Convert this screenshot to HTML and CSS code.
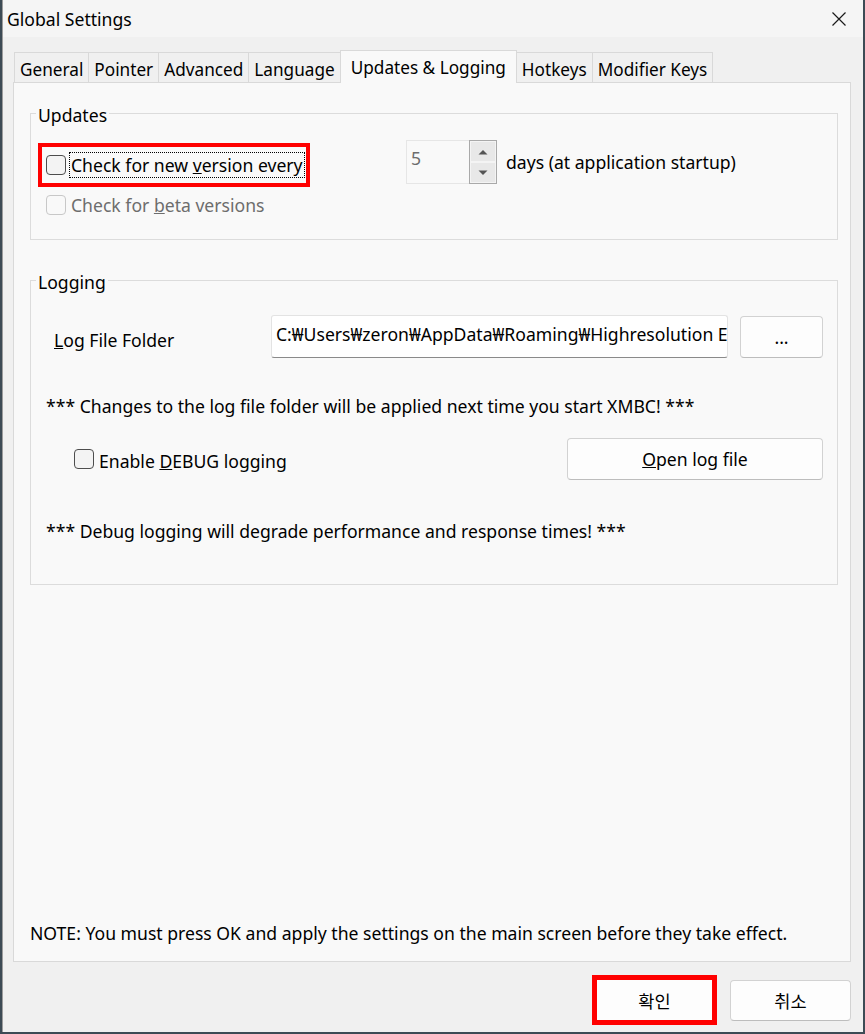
FILE: index.html
```html
<!DOCTYPE html>
<html lang="en">
<head>
    <meta charset="UTF-8">
    <meta name="viewport" content="width=device-width, initial-scale=1">
    <title>Global Settings</title>
    <link rel="stylesheet" href="styles.css">
</head>
<body>
    <div class="window">
        <div class="titlebar">
            <span class="title">Global Settings</span>
            <svg class="close" width="16" height="16" viewBox="0 0 16 16">
                <path d="M1.5 1.5 L14.5 14.5 M14.5 1.5 L1.5 14.5" stroke="#1a1a1a" stroke-width="1.2" fill="none"/>
            </svg>
        </div>

        <div class="main">
            <div class="tabs">
                <div class="tab">General</div>
                <div class="tab">Pointer</div>
                <div class="tab">Advanced</div>
                <div class="tab">Language</div>
                <div class="tab active">Updates &amp; Logging</div>
                <div class="tab">Hotkeys</div>
                <div class="tab">Modifier Keys</div>
            </div>

            <div class="pane">
                <div class="group updates">
                    <div class="group-title">Updates</div>
                    <div class="check-row">
                        <div class="hl">
                            <span class="box"></span>
                            <span class="lbl focus">Check for new <u>v</u>ersion every</span>
                        </div>
                        <div class="spin">
                            <span class="spin-val">5</span>
                            <div class="spin-btns">
                                <span class="spin-btn">
                                    <svg width="10" height="6" viewBox="0 0 10 6"><path d="M0.5 5.5 L5 1 L9.5 5.5 Z" fill="#555"/></svg>
                                </span>
                                <span class="spin-btn">
                                    <svg width="10" height="6" viewBox="0 0 10 6"><path d="M0.5 0.5 L5 5 L9.5 0.5 Z" fill="#555"/></svg>
                                </span>
                            </div>
                        </div>
                        <span class="days">days (at application startup)</span>
                    </div>
                    <div class="beta-row">
                        <span class="box off"></span>
                        <span class="lbl dim">Check for <u>b</u>eta versions</span>
                    </div>
                </div>

                <div class="group logging">
                    <div class="group-title">Logging</div>
                    <div class="folder-row">
                        <span class="folder-lbl"><u>L</u>og File Folder</span>
                        <div class="field">C:₩Users₩zeron₩AppData₩Roaming₩Highresolution Enterprises₩XMBC</div>
                        <button class="btn dots">...</button>
                    </div>
                    <p class="msg first">*** Changes to the log file folder will be applied next time you start XMBC! ***</p>
                    <div class="debug-row">
                        <div class="debug-check">
                            <span class="box"></span>
                            <span class="lbl debug-lbl">Enable <u>D</u>EBUG logging</span>
                        </div>
                        <button class="btn open"><u>O</u>pen log file</button>
                    </div>
                    <p class="msg second">*** Debug logging will degrade performance and response times! ***</p>
                </div>

                <p class="note">NOTE: You must press OK and apply the settings on the main screen before they take effect.</p>
            </div>
        </div>

        <div class="footer">
            <div class="hl-btn"><button class="btn ok">확인</button></div>
            <button class="btn cancel">취소</button>
        </div>
    </div>
</body>
</html>
```

FILE: styles.css
```css
body {
    margin: 0;
    background: #3d4b55;
    font-family: "Noto Sans", "Noto Sans CJK KR", sans-serif;
    font-size: 17.6px;
    color: #000;
}

.window {
    width: 861px;
    height: 1032px;
    margin-left: 2px;
    box-sizing: border-box;
    border-left: 1px solid #9c9c9c;
    background: #f0f0f0;
    display: flex;
    flex-direction: column;
}

.titlebar {
    height: 37px;
    flex: none;
    background: #f5f5f5;
    display: flex;
    align-items: center;
    justify-content: space-between;
    padding: 0 16px 0 4px;
}

.title {
    line-height: 24px;
}

.main {
    padding: 13px 0 0 10px;
}

.tabs {
    display: flex;
    align-items: flex-end;
    margin-left: 1px;
}

.tab {
    font-size: 17.2px;
    line-height: 24px;
    padding: 5px 5px 0;
    border: 1px solid #d9d9d9;
    border-bottom: none;
    margin-right: -1px;
    background: #f0f0f0;
}

.tab.active {
    position: relative;
    z-index: 1;
    background: #f9f9f9;
    padding: 5px 10px 3px;
    margin-bottom: -1px;
}

.pane {
    width: 838px;
    height: 880px;
    box-sizing: border-box;
    border: 1px solid #d9d9d9;
    background: #f9f9f9;
    padding: 30px 12px 16px 16px;
    display: flex;
    flex-direction: column;
}

.group {
    border: 1px solid #dcdcdc;
}

.group-title {
    width: fit-content;
    margin: -9px 0 0 5px;
    padding: 0 2px;
    line-height: 20px;
    background: #f9f9f9;
}

.box {
    flex: none;
    width: 20px;
    height: 20px;
    box-sizing: border-box;
    border: 1px solid #4d4d4d;
    border-radius: 4px;
    background: #f3f3f3;
}

.box.off {
    border-color: #c8c8c8;
    background: #f9f9f9;
}

.lbl {
    line-height: 24px;
    white-space: nowrap;
}

.dim {
    color: #6d6d6d;
}

/* updates */
.check-row {
    display: flex;
    align-items: flex-start;
    margin-top: 15px;
}

.hl {
    width: 272px;
    height: 44px;
    box-sizing: border-box;
    border: 4px solid #ff0000;
    margin: 3px 0 0 7px;
    padding-left: 4px;
    display: flex;
    align-items: center;
}

.focus {
    margin-left: 4px;
    padding: 0 1px;
    line-height: 24px;
    outline: 1px dotted #000;
}

.spin {
    display: flex;
    width: 91px;
    height: 44px;
    margin-left: 96px;
}

.spin-val {
    flex: 1;
    box-sizing: border-box;
    border: 1px solid #e6e6e6;
    border-right: none;
    padding: 5px 4px;
    line-height: 24px;
    color: #6d6d6d;
    background: #f9f9f9;
}

.spin-btns {
    width: 28px;
    box-sizing: border-box;
    border: 1px solid #a9a9a9;
    padding: 1px;
    display: flex;
    flex-direction: column;
    gap: 2px;
    background: #f4f4f4;
}

.spin-btn {
    flex: 1;
    background: #e8e8e8;
    display: flex;
    align-items: center;
    justify-content: center;
}

.days {
    margin: 10px 0 0 9px;
    line-height: 24px;
}

.beta-row {
    display: flex;
    align-items: center;
    gap: 5px;
    margin: 6px 0 0 15px;
    padding-bottom: 22px;
}

/* logging */
.logging {
    margin-top: 40px;
}

.folder-row {
    display: flex;
    align-items: flex-start;
    margin-top: 23px;
}

.folder-lbl {
    width: 217px;
    margin: 13px 0 0 23px;
    line-height: 24px;
}

.field {
    width: 457px;
    height: 43px;
    box-sizing: border-box;
    padding: 6px 4px;
    line-height: 24px;
    white-space: nowrap;
    overflow: hidden;
    background: #fff;
    border: 1px solid #e3e3e3;
    border-bottom-color: #8a8a8a;
    border-radius: 3px;
}

.btn {
    font: inherit;
    color: #000;
    background: #fdfdfd;
    border: 1px solid #d2d2d2;
    border-bottom-color: #bdbdbd;
    border-radius: 4px;
    padding: 0;
    cursor: pointer;
}

.dots {
    width: 83px;
    height: 42px;
    margin: 1px 0 0 12px;
}

.msg {
    margin: 0;
    padding-left: 15px;
    line-height: 24px;
}

.msg.first {
    margin-top: 36px;
}

.debug-row {
    display: flex;
    align-items: center;
    justify-content: space-between;
    margin: 20px 14px 0 43px;
}

.debug-check {
    display: flex;
    align-items: center;
    gap: 5px;
}

.debug-lbl {
    margin-top: 3px;
}

.open {
    width: 256px;
    height: 42px;
}

.msg.second {
    margin-top: 39px;
    padding-bottom: 41px;
}

.note {
    margin: auto 0 0;
    line-height: 24px;
}

/* footer */
.footer {
    display: flex;
    justify-content: flex-end;
    align-items: center;
    gap: 13px;
    padding: 13px 12px 0 0;
}

.hl-btn {
    width: 125px;
    height: 50px;
    box-sizing: border-box;
    border: 5px solid #ff0000;
}

.hl-btn .ok {
    width: 100%;
    height: 100%;
    border: none;
    border-radius: 0;
}

.cancel {
    width: 121px;
    height: 41px;
}
```
